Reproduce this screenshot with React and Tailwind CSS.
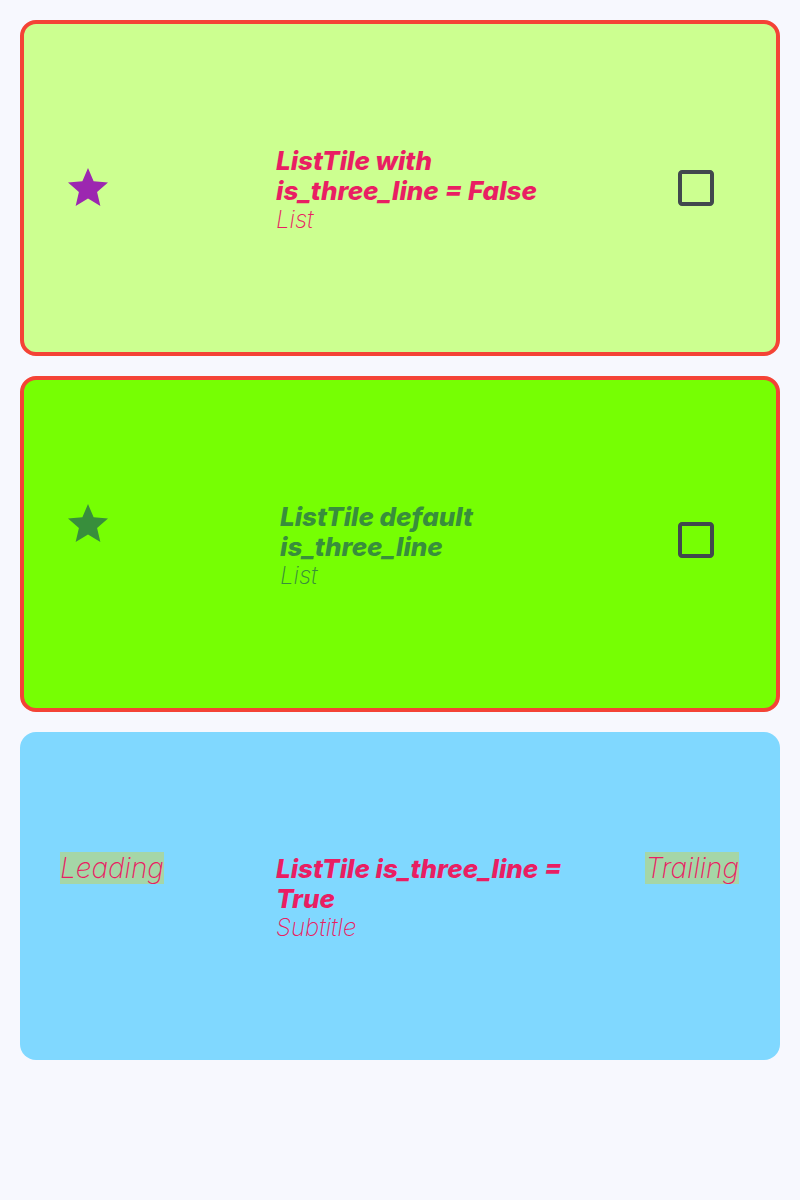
import React from "react";

const Star = ({ color }) => (
  <svg width="48" height="48" viewBox="0 0 24 24" fill={color}>
    <path d="M12 17.27L18.18 21l-1.64-7.03L22 9.24l-7.19-.61L12 2 9.19 8.63 2 9.24l5.46 4.73L5.82 21z" />
  </svg>
);

const Box = () => (
  <svg width="48" height="48" viewBox="0 0 24 24" fill="#41484d">
    <path d="M19 5v14H5V5h14m0-2H5c-1.1 0-2 .9-2 2v14c0 1.1.9 2 2 2h14c1.1 0 2-.9 2-2V5c0-1.1-.9-2-2-2z" />
  </svg>
);

const font = { fontFamily: "Inter, 'Liberation Sans', sans-serif" };

export default function App() {
  return (
    <div className="min-h-[1200px] w-[800px] bg-[#f7f8fe] pt-5 flex flex-col gap-5" style={font}>
      {/* Card 1 */}
      <div className="mx-5 h-[336px] rounded-2xl border-4 border-[#f44336] bg-[#ccff90] flex items-center pl-[40px] pr-[56px]">
        <div className="w-[212px] shrink-0">
          <Star color="#9c27b0" />
        </div>
        <div className="flex-1 mt-[4px]">
          <div className="text-[26px] leading-[30px] font-extrabold italic text-[#e91e63] w-[300px]">
            ListTile with is_three_line = False
          </div>
          <div className="text-[24px] leading-[28px] font-extralight italic text-[#e91e63]">List</div>
        </div>
        <div className="shrink-0">
          <Box />
        </div>
      </div>

      {/* Card 2 */}
      <div className="mx-5 h-[336px] rounded-2xl border-4 border-[#f44336] bg-[#76ff03] flex items-center pl-[40px] pr-[56px]">
        <div className="flex-1 flex items-start">
          <div className="w-[216px] shrink-0 mt-[2px]">
            <Star color="#388e3c" />
          </div>
          <div className="flex-1 mt-[4px]">
            <div className="text-[26px] leading-[30px] font-extrabold italic text-[#388e3c] w-[240px]">
              ListTile default is_three_line
            </div>
            <div className="text-[24px] leading-[28px] font-extralight italic text-[#388e3c]">List</div>
          </div>
        </div>
        <div className="shrink-0 -mt-2">
          <Box />
        </div>
      </div>

      {/* Card 3 */}
      <div className="mx-5 h-[328px] rounded-2xl bg-[#80d8ff] flex items-center pl-[40px] pr-[41px]">
        <div className="flex-1 flex items-start">
          <div className="w-[216px] shrink-0 mt-[2px]">
            <span className="inline-block bg-[#a5d6a7] text-[28px] leading-[32px] font-extralight italic text-[#e91e63]">
              Leading
            </span>
          </div>
          <div className="flex-1 mt-[4px]">
            <div className="text-[26px] leading-[30px] font-extrabold italic text-[#e91e63] w-[300px]">
              ListTile is_three_line = True
            </div>
            <div className="text-[24px] leading-[28px] font-extralight italic text-[#e91e63]">Subtitle</div>
          </div>
          <div className="shrink-0 mt-[2px]">
            <span className="inline-block bg-[#a5d6a7] text-[28px] leading-[32px] font-extralight italic text-[#e91e63]">
              Trailing
            </span>
          </div>
        </div>
      </div>
    </div>
  );
}
